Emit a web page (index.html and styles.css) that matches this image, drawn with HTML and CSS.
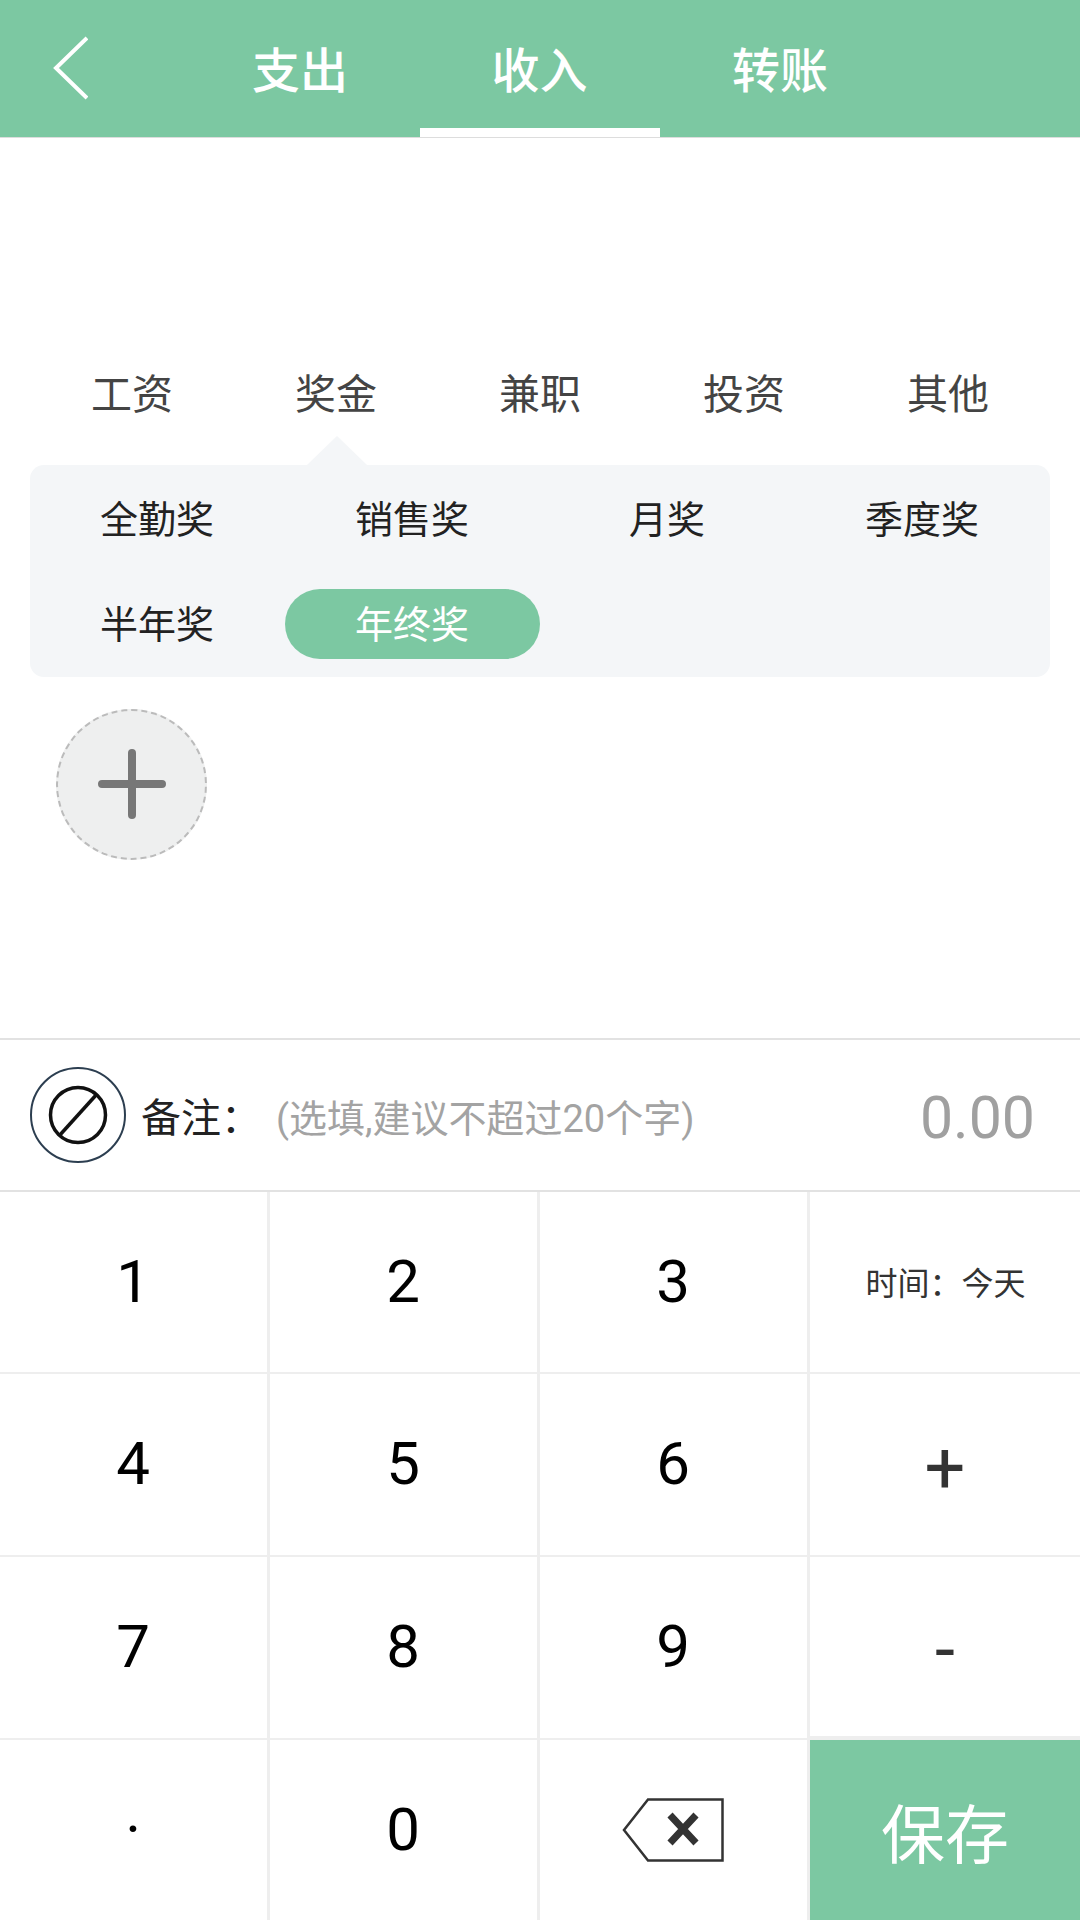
FILE: index.html
```html
<!DOCTYPE html>
<html lang="zh-CN">
<head>
    <meta charset="UTF-8">
    <meta name="viewport" content="width=device-width, initial-scale=1.0">
    <title>记账</title>
    <link rel="stylesheet" href="styles.css">
</head>
<body>
    <header class="topbar">
        <button class="back" aria-label="返回">
            <svg width="36" height="64" viewBox="0 0 36 64"><path d="M35 2 L4 32 L35 62" fill="none" stroke="#fff" stroke-width="4"/></svg>
        </button>
        <nav class="tabs">
            <a class="tab">支出</a>
            <a class="tab active">收入</a>
            <a class="tab">转账</a>
        </nav>
    </header>

    <main class="content">
        <div class="categories">
            <span>工资</span>
            <span>奖金</span>
            <span>兼职</span>
            <span>投资</span>
            <span>其他</span>
        </div>
        <div class="subpanel">
            <span class="sub">全勤奖</span>
            <span class="sub">销售奖</span>
            <span class="sub">月奖</span>
            <span class="sub">季度奖</span>
            <span class="sub">半年奖</span>
            <span class="sub selected">年终奖</span>
        </div>
        <button class="add" aria-label="添加">
            <svg width="70" height="70" viewBox="0 0 70 70"><path d="M35 4 V66 M5 35 H65" stroke="#777" stroke-width="8" stroke-linecap="round"/></svg>
        </button>
    </main>

    <section class="note">
        <svg class="note-icon" width="96" height="96" viewBox="0 0 96 96">
            <circle cx="48" cy="48" r="47" fill="none" stroke="#2c3e50" stroke-width="2"/>
            <circle cx="48" cy="48" r="27.500" fill="none" stroke="#111" stroke-width="3.500"/>
            <path d="M67 27 L29 69" stroke="#111" stroke-width="3.500"/>
        </svg>
        <span class="note-label">备注：</span>
        <span class="note-hint">(选填,建议不超过20个字)</span>
        <span class="amount">0.00</span>
    </section>

    <section class="keypad">
        <div class="key">1</div>
        <div class="key">2</div>
        <div class="key">3</div>
        <div class="key small">时间：今天</div>
        <div class="key">4</div>
        <div class="key">5</div>
        <div class="key">6</div>
        <div class="key op">+</div>
        <div class="key">7</div>
        <div class="key">8</div>
        <div class="key">9</div>
        <div class="key op">-</div>
        <div class="key">·</div>
        <div class="key">0</div>
        <div class="key icon">
            <svg width="102" height="64" viewBox="0 0 102 64">
                <path d="M26 1.500 H100.500 V62.500 H26 L2 32 Z" fill="none" stroke="#333" stroke-width="2.500"/>
                <path d="M48 17 L74 45 M74 17 L48 45" stroke="#333" stroke-width="7"/>
            </svg>
        </div>
        <div class="key save">保存</div>
    </section>
</body>
</html>
```

FILE: styles.css
```css
* {
    box-sizing: border-box;
}
body {
    margin: 0;
    width: 1080px;
    height: 1920px;
    display: flex;
    flex-direction: column;
    overflow: hidden;
    background-color: #ffffff;
    color: #333333;
    font-family: Roboto, "Noto Sans CJK SC", sans-serif;
}
button {
    padding: 0;
    border: none;
    background: none;
}

/* top bar */
.topbar {
    height: 138px;
    display: flex;
    background-color: #7cc8a2;
    border-bottom: 1px solid #dddddd;
}
.back {
    width: 180px;
    height: 137px;
    display: flex;
    align-items: center;
    padding: 0 0 2px 52px;
}
.tabs {
    display: flex;
}
.tab {
    width: 240px;
    height: 137px;
    display: flex;
    align-items: center;
    justify-content: center;
    padding-bottom: 3px;
    color: #ffffff;
    font-size: 48px;
    font-weight: 500;
}
.tab.active {
    border-bottom: 9px solid #ffffff;
    padding: 6px 1px 0 0;
}

/* categories */
.content {
    flex: 1;
    padding: 203px 30px 0;
}
.categories {
    height: 100px;
    display: grid;
    grid-template-columns: repeat(5, 1fr);
    align-items: center;
    text-align: center;
    font-size: 41px;
    color: #444444;
}
.subpanel {
    position: relative;
    height: 212px;
    margin-top: 24px;
    padding-top: 1px;
    display: grid;
    grid-template-columns: repeat(4, 1fr);
    grid-auto-rows: 105px;
    align-items: center;
    justify-items: stretch;
    text-align: center;
    background-color: #f4f6f8;
    border-radius: 14px;
}
.subpanel::before {
    content: "";
    position: absolute;
    left: 277px;
    top: -29px;
    border-left: 30px solid transparent;
    border-right: 30px solid transparent;
    border-bottom: 29px solid #f4f6f8;
}
.sub {
    height: 70px;
    padding-right: 1px;
    font-size: 38px;
    line-height: 72px;
    color: #222222;
}
.sub.selected {
    background-color: #7cc8a2;
    color: #ffffff;
    border-radius: 35px;
}
.add {
    width: 151px;
    height: 151px;
    margin: 32px 0 0 26px;
    display: flex;
    align-items: center;
    justify-content: center;
    padding: 0 0 2px 0;
    background-color: #eeefef;
    border: 2px dashed #bbbbbb;
    border-radius: 50%;
}

/* note row */
.note {
    height: 152px;
    display: flex;
    align-items: center;
    padding: 0 45px 0 30px;
    border-top: 2px solid #e2e2e2;
}
.note-label {
    margin-left: 15px;
    width: 135px;
    font-size: 40px;
    color: #222222;
}
.note-hint {
    font-size: 38px;
    color: #a3a3a3;
}
.amount {
    margin-left: auto;
    padding-top: 4px;
    font-size: 59px;
    color: #a0a0a0;
}

/* keypad */
.keypad {
    height: 730px;
    display: grid;
    grid-template-columns: repeat(4, 1fr);
    grid-template-rows: 182px 183px 183px 1fr;
    border-top: 2px solid #e2e2e2;
}
.key {
    display: flex;
    align-items: center;
    justify-content: center;
    padding: 0 1px 2px 0;
    font-size: 60px;
    color: #000000;
    border-right: 3px solid #eeeeee;
    border-bottom: 2px solid #eeeeee;
}
.key:nth-child(4n) {
    border-right: none;
}
.key:nth-child(12) {
    border-bottom-width: 4px;
}
.key:nth-last-child(-n+4) {
    border-bottom: none;
}
.key.small {
    padding-left: 2px;
    font-size: 32px;
    color: #333333;
}
.key.op {
    padding: 5px 0 0;
    font-size: 72px;
    color: #333333;
}
.key.icon {
    padding: 0 1px 0 0;
}
.key.save {
    padding: 0;
    background-color: #7cc8a2;
    color: #ffffff;
    font-size: 64px;
}
```
